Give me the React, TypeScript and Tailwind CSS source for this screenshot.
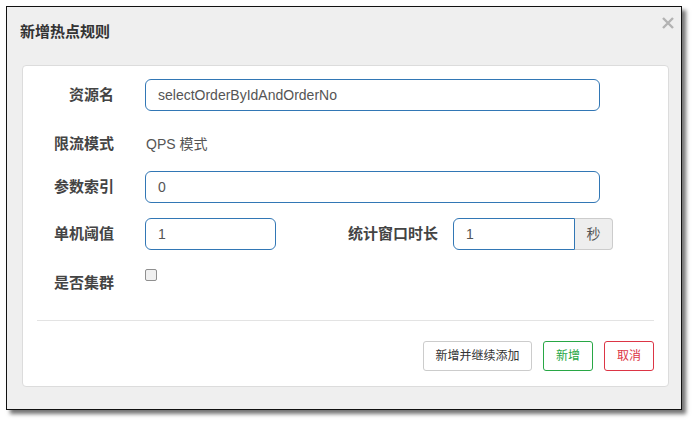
import React from "react";

const font = { fontFamily: '"Liberation Sans", Arial, "Noto Sans CJK SC", sans-serif' };

export default function App() {
  return (
    <div className="w-[695px] h-[423px] bg-white pl-[6px] pt-[6px]" style={font}>
      <div className="relative w-[676px] h-[404px] border border-[#111] bg-[#efefef] shadow-[4px_4px_4px_rgba(0,0,0,0.55)]">
        <div className="h-[58px] pl-[13px] pt-[15px]">
          <div className="text-[15px] leading-[20px] font-bold text-[#333]">新增热点规则</div>
        </div>
        <svg className="absolute left-[655px] top-[10px]" width="12" height="12" viewBox="0 0 12 12">
          <path d="M1 1 L11 11 M11 1 L1 11" stroke="#b3b3b3" strokeWidth="2.4" />
        </svg>
        <div className="ml-[15px] mr-[12px] h-[322px] rounded-[4px] border border-[#dcdcdc] bg-white flex flex-col">
          {/* row 1 */}
          <div className="flex items-center h-[32px] mt-[13px]">
            <div className="w-[91px] text-right text-[15px] font-bold text-[#444]">资源名</div>
            <div className="ml-[31px] w-[455px] h-[32px] rounded-[6px] border border-[#3277b5] flex items-center pl-[12px] text-[14px] text-[#555]">
              selectOrderByIdAndOrderNo
            </div>
          </div>
          {/* row 2 */}
          <div className="flex items-center h-[32px] mt-[17px]">
            <div className="w-[91px] text-right text-[15px] font-bold text-[#444]">限流模式</div>
            <div className="ml-[32px] text-[14px] text-[#555]">QPS 模式</div>
          </div>
          {/* row 3 */}
          <div className="flex items-center h-[32px] mt-[11px]">
            <div className="w-[91px] text-right text-[15px] font-bold text-[#444]">参数索引</div>
            <div className="ml-[31px] w-[455px] h-[32px] rounded-[6px] border border-[#3277b5] flex items-center pl-[12px] text-[14px] text-[#555]">
              0
            </div>
          </div>
          {/* row 4 */}
          <div className="flex items-center h-[32px] mt-[15px]">
            <div className="w-[91px] text-right text-[15px] font-bold text-[#444]">单机阈值</div>
            <div className="ml-[31px] w-[131px] h-[32px] rounded-[6px] border border-[#3277b5] flex items-center pl-[12px] text-[14px] text-[#555]">
              1
            </div>
            <div className="w-[162px] text-right text-[15px] font-bold text-[#444]">统计窗口时长</div>
            <div className="ml-[15px] flex h-[32px]">
              <div className="w-[122px] h-[32px] rounded-l-[6px] border border-[#3277b5] flex items-center pl-[12px] text-[14px] text-[#555]">
                1
              </div>
              <div className="w-[38px] h-[32px] rounded-r-[4px] border border-l-0 border-[#cccccc] bg-[#eeeeee] flex items-center justify-center text-[14px] text-[#555]">
                秒
              </div>
            </div>
          </div>
          {/* row 5 */}
          <div className="flex items-start h-[32px] mt-[17px]">
            <div className="w-[91px] text-right text-[15px] leading-[32px] font-bold text-[#444]">是否集群</div>
            <div className="ml-[31px] mt-[2px] w-[12px] h-[12px] rounded-[2px] border border-[#8f8f8f] bg-[#f0f0f0]" />
          </div>
          <div className="mx-[14px] mt-[21px] h-px bg-[#e3e3e3]" />
          <div className="flex justify-end gap-[11px] mt-[20px] mr-[14px]">
            <div className="w-[109px] h-[30px] rounded-[3px] border border-[#cccccc] flex items-center justify-center text-[12px] text-[#333]">
              新增并继续添加
            </div>
            <div className="w-[50px] h-[30px] rounded-[3px] border border-[#28a745] flex items-center justify-center text-[12px] text-[#28a745]">
              新增
            </div>
            <div className="w-[50px] h-[30px] rounded-[3px] border border-[#dc3545] flex items-center justify-center text-[12px] text-[#dc3545]">
              取消
            </div>
          </div>
        </div>
      </div>
    </div>
  );
}
